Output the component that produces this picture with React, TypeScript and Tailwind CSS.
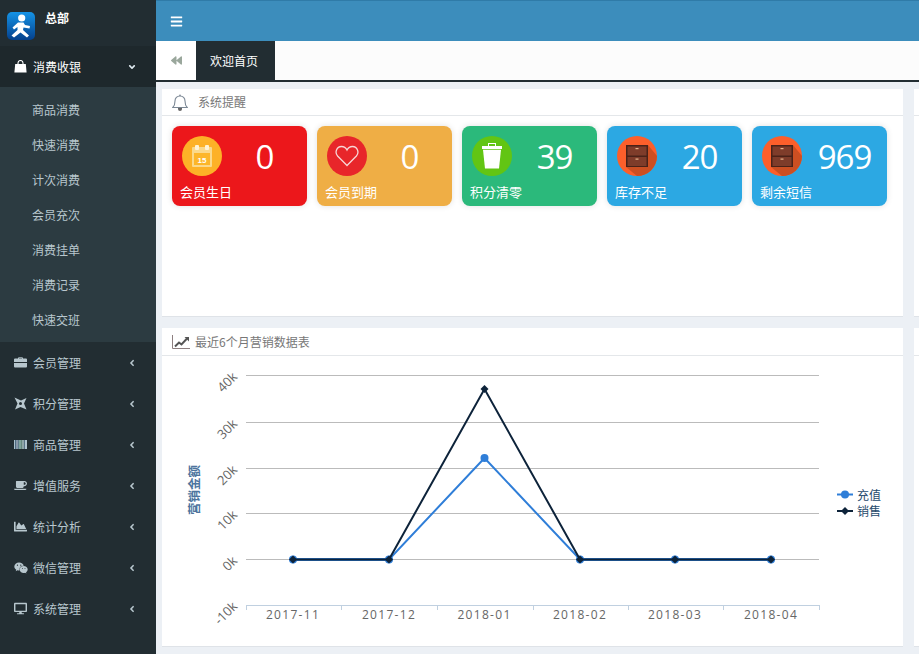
import React from "react";
import {
  FaAngleDown,
  FaAngleLeft,
  FaBackward,
  FaBars,
  FaChartArea,
  FaCoffee,
  FaDesktop,
  FaWeixin,
} from "react-icons/fa";

const subItems = ["商品消费", "快速消费", "计次消费", "会员充次", "消费挂单", "消费记录", "快速交班"];

function BagIcon() {
  return (
    <svg width="13" height="13" viewBox="0 0 13 13" className="mr-[6px] shrink-0">
      <path d="M4 5 V3 A2.5 2.5 0 0 1 9 3 V5" fill="none" stroke="currentColor" strokeWidth="1.1" />
      <path d="M1.2 4 H11.8 L12.6 12.5 H0.4 Z" fill="currentColor" />
    </svg>
  );
}

function CaseIcon() {
  return (
    <svg width="13" height="13" viewBox="0 0 13 13" className="mr-[6px] shrink-0">
      <path d="M4.5 3 V1.8 H8.5 V3" fill="none" stroke="currentColor" strokeWidth="1" />
      <path d="M1 2.5 H12 A1 1 0 0 1 13 3.5 V6 H0 V3.5 A1 1 0 0 1 1 2.5 Z" fill="currentColor" />
      <path d="M0 7 H13 V10.5 A1 1 0 0 1 12 11.5 H1 A1 1 0 0 1 0 10.5 Z" fill="currentColor" />
    </svg>
  );
}

function PinwheelIcon() {
  return (
    <svg width="13" height="13" viewBox="0 0 13 13" className="mr-[6px] shrink-0">
      <path
        fillRule="evenodd"
        d="M0.5 0.5 L7 3.5 L12.5 1 L10 6.5 L12.5 12.5 L6.5 10 L1 12.5 L3.5 6.5 Z M6.5 5 A1.5 1.5 0 1 0 6.5 8 A1.5 1.5 0 1 0 6.5 5 Z"
        fill="currentColor"
      />
    </svg>
  );
}

function BarcodeIcon() {
  return (
    <svg width="13" height="13" viewBox="0 0 13 13" className="mr-[6px] shrink-0">
      <rect x="0" y="2" width="1" height="9" fill="#a9c0cc" />
      <rect x="1" y="2" width="1" height="9" fill="#4d6a80" />
      <rect x="2" y="2" width="2" height="9" fill="#8797a8" />
      <rect x="4" y="2" width="1" height="9" fill="#5f7d8c" />
      <rect x="5" y="2" width="2" height="9" fill="#7fa39c" />
      <rect x="7" y="2" width="1" height="9" fill="#66897f" />
      <rect x="8" y="2" width="2" height="9" fill="#8fa6a8" />
      <rect x="10" y="2" width="1" height="9" fill="#5a7488" />
      <rect x="11" y="2" width="2" height="9" fill="#b0c4cf" />
    </svg>
  );
}

const menuItems: { label: string; icon: React.ReactNode }[] = [
  { label: "会员管理", icon: <CaseIcon /> },
  { label: "积分管理", icon: <PinwheelIcon /> },
  { label: "商品管理", icon: <BarcodeIcon /> },
  { label: "增值服务", icon: <FaCoffee className="text-[13px] w-[13px] mr-[6px]" /> },
  { label: "统计分析", icon: <FaChartArea className="text-[13px] w-[13px] mr-[6px]" /> },
  { label: "微信管理", icon: <FaWeixin className="text-[14px] w-[14px] mr-[5px]" /> },
  { label: "系统管理", icon: <FaDesktop className="text-[13px] w-[13px] mr-[6px]" /> },
];

function Logo() {
  return (
    <svg width="28" height="28" viewBox="0 0 28 28" className="shrink-0">
      <defs>
        <linearGradient id="logoBg" x1="0" y1="0" x2="0" y2="1">
          <stop offset="0" stopColor="#1593e6" />
          <stop offset="1" stopColor="#04408c" />
        </linearGradient>
      </defs>
      <rect width="28" height="28" rx="5" fill="url(#logoBg)" />
      <circle cx="14.7" cy="6" r="3.6" fill="#fff" />
      <path
        d="M11 10.5 L16.5 10.5 L18 13 L23 14 L22.5 16.5 L16.5 15.5 L16 18 L22 23.5 L20 25.5 L13.5 20.5 L7 25.5 L4.5 23.5 L10.5 18 L10.5 15 L7 17.5 L5.5 15.5 Z"
        fill="#fff"
      />
    </svg>
  );
}

function CalendarIcon() {
  return (
    <svg width="22" height="24" viewBox="0 0 22 24">
      <rect x="1" y="3" width="20" height="20" rx="1" fill="#fbd98b" />
      <rect x="3" y="9" width="16" height="12" fill="#fdb62a" />
      <rect x="4" y="1" width="4" height="5" rx="1" fill="#fff3d6" />
      <rect x="14" y="1" width="4" height="5" rx="1" fill="#fff3d6" />
      <text x="11" y="19" textAnchor="middle" fontSize="8" fontWeight="700" fill="#fff" fontFamily="Liberation Sans, sans-serif">
        15
      </text>
    </svg>
  );
}

function HeartIcon() {
  return (
    <svg width="24" height="22" viewBox="0 0 24 22" fill="none">
      <path
        d="M12 20.5 L2.6 11 C-0.5 7.5 1.5 1.5 6.5 1.5 C9 1.5 11 3 12 5 C13 3 15 1.5 17.5 1.5 C22.5 1.5 24.5 7.5 21.4 11 Z"
        stroke="#f8d6d6"
        strokeWidth="1.3"
      />
    </svg>
  );
}

function TrashIcon() {
  return (
    <svg width="20" height="26" viewBox="0 0 20 26">
      <rect x="6.5" y="0.5" width="7" height="3" fill="none" stroke="#fff" strokeWidth="1" />
      <rect x="0" y="3" width="20" height="3" fill="#fff" />
      <path d="M1 6.8 H19 L17 25.5 H3 Z" fill="#fff" />
    </svg>
  );
}

function DrawerIcon() {
  return (
    <svg width="40" height="40" viewBox="0 0 40 40" className="shrink-0">
      <circle cx="20" cy="20" r="20" fill="#fc5f2b" />
      <path d="M9 31 L31 9 L40 20 A20 20 0 0 1 20 40 Z" fill="#cc4f22" />
      <rect x="9" y="9" width="22" height="22" fill="#4a2218" />
      <rect x="10.5" y="10.5" width="19" height="9" fill="#7e3c2a" />
      <rect x="10.5" y="21" width="19" height="9" fill="#7e3c2a" />
      <rect x="18.5" y="12" width="3" height="1.2" fill="#e8b48c" />
      <rect x="18.5" y="22.5" width="3" height="1.2" fill="#e8b48c" />
    </svg>
  );
}

function BellIcon() {
  return (
    <svg width="16" height="17" viewBox="0 0 16 17" fill="none" className="mr-[10px] shrink-0">
      <path
        d="M0.8 13.5 C2.8 11.5 3 9.5 3 7 C3 4 5 2 8 2 C11 2 13 4 13 7 C13 9.5 13.2 11.5 15.2 13.5 Z"
        stroke="#7b8794"
        strokeWidth="1.1"
      />
      <path d="M7 1.8 H9 V0.8 H7 Z" fill="#7b8794" />
      <path d="M6 14 H10 V15 A2 2 0 0 1 6 15 Z" fill="#666666" />
    </svg>
  );
}

function TrendIcon() {
  return (
    <svg width="18" height="14" viewBox="0 0 18 14" fill="none" className="mr-[5px] shrink-0">
      <path d="M0.5 0 V13.5 H18" stroke="#8d7f80" strokeWidth="1" />
      <path d="M3 11.5 L7 7.5 L9.5 9.5 L15 3.5" stroke="#555555" strokeWidth="2" />
      <path d="M12.5 2 H17 V6.5 Z" fill="#555555" />
    </svg>
  );
}

function StatCard({ color, label, value, icon }: { color: string; label: string; value: string; icon: React.ReactNode }) {
  return (
    <div className={`w-[135px] h-[80px] rounded-lg shadow-[0_0_6px_rgba(0,0,0,0.12)] text-white shrink-0 ${color}`}>
      <div className="flex h-[50px] pl-[10px] pt-[10px]">
        {icon}
        <div className="flex-1 text-center text-[33px] tracking-[-1px] leading-[42px] font-['Open_Sans',sans-serif]">{value}</div>
      </div>
      <div className="text-[13px] leading-[18px] pl-2 pt-[7px]">{label}</div>
    </div>
  );
}

function Circle({ color, children }: { color: string; children: React.ReactNode }) {
  return <div className={`w-10 h-10 rounded-full flex items-center justify-center shrink-0 ${color}`}>{children}</div>;
}

function Chart() {
  const xs = [293, 389, 484.5, 580, 675, 771];
  const months = ["2017-11", "2017-12", "2018-01", "2018-02", "2018-03", "2018-04"];
  const grid = [
    { y: 375.5, label: "40k" },
    { y: 422.5, label: "30k" },
    { y: 468.5, label: "20k" },
    { y: 513.5, label: "10k" },
    { y: 559.5, label: "0k" },
  ];
  const blue = [559.5, 559.5, 458, 559.5, 559.5, 559.5];
  const dark = [559.5, 559.5, 389, 559.5, 559.5, 559.5];
  const pts = (ys: number[]) => xs.map((x, i) => `${x},${ys[i]}`).join(" ");
  const ticks = [246, 341, 437, 533, 628, 723, 819];

  return (
    <svg width="741" height="291" viewBox="162 356 741 291" className="block" fontFamily="'Noto Sans CJK SC', sans-serif">
      {grid.map((g) => (
        <line key={g.y} x1="246" x2="819" y1={g.y} y2={g.y} stroke="#bbbbbb" strokeWidth="1" />
      ))}
      <line x1="246" x2="819" y1="605.5" y2="605.5" stroke="#c0d0e0" />
      {ticks.map((x) => (
        <line key={x} x1={x + 0.5} x2={x + 0.5} y1="605" y2="610" stroke="#c0d0e0" />
      ))}
      {[...grid, { y: 605, label: "-10k" }].map((g) => (
        <text
          key={g.label}
          x="236"
          y={g.y + 3}
          textAnchor="end"
          fontSize="13"
          fill="#666666"
          fontFamily="'Open Sans', sans-serif"
          transform={`rotate(-45 236 ${g.y})`}
        >
          {g.label}
        </text>
      ))}
      {months.map((m, i) => (
        <text key={m} x={xs[i]} y="619" textAnchor="middle" fontSize="12" letterSpacing="1.3" fill="#666666" fontFamily="'Open Sans', sans-serif">
          {m}
        </text>
      ))}
      <text x="199" y="490" textAnchor="middle" fontSize="12.5" fontWeight="700" fill="#4d759e" transform="rotate(-90 199 490)">
        营销金额
      </text>
      <polyline points={pts(blue)} fill="none" stroke="#2f7ed8" strokeWidth="2" />
      <line x1="293" x2="389" y1="559.5" y2="559.5" stroke="#2f7ed8" strokeWidth="3" />
      <line x1="580" x2="771" y1="559.5" y2="559.5" stroke="#2f7ed8" strokeWidth="3" />
      {xs.map((x, i) => (
        <circle key={x} cx={x} cy={blue[i]} r="4" fill="#2f7ed8" />
      ))}
      <polyline points={pts(dark)} fill="none" stroke="#0d233a" strokeWidth="2" />
      {xs.map((x, i) => (
        <path key={x} d={`M${x} ${dark[i] - 4} L${x + 4} ${dark[i]} L${x} ${dark[i] + 4} L${x - 4} ${dark[i]} Z`} fill="#0d233a" />
      ))}
      <line x1="837" x2="853" y1="494.5" y2="494.5" stroke="#2f7ed8" strokeWidth="2" />
      <circle cx="845" cy="494.5" r="4" fill="#2f7ed8" />
      <text x="857" y="499.5" fontSize="12" fill="#274b6d">
        充值
      </text>
      <line x1="837" x2="853" y1="511" y2="511" stroke="#0d233a" strokeWidth="2" />
      <path d="M845 507 L849 511 L845 515 L841 511 Z" fill="#0d233a" />
      <text x="857" y="515.5" fontSize="12" fill="#274b6d">
        销售
      </text>
    </svg>
  );
}

export default function App() {
  return (
    <div className="flex h-[654px] w-[919px] overflow-hidden bg-[#ecf0f5] font-['Noto_Sans_CJK_SC',sans-serif]">
      <aside className="w-[156px] shrink-0 bg-[#222d32] text-[12px] text-[#b8c7ce]">
        <div className="flex h-[46px] pl-[7px] pt-3 gap-[10px]">
          <Logo />
          <span className="text-[12px] font-bold text-white leading-[12px]">总部</span>
        </div>
        <div className="flex h-[41px] items-center bg-[#1e282c] pl-[14px] pr-[19px] text-white">
          <BagIcon />
          <span className="flex-1">消费收银</span>
          <FaAngleDown className="text-[10px] text-[#dfeaf0]" />
        </div>
        <ul className="bg-[#2c3b41] py-[5px] h-[255px]">
          {subItems.map((item) => (
            <li key={item} className="flex h-[35px] items-center pl-8">
              {item}
            </li>
          ))}
        </ul>
        {menuItems.map(({ label, icon }) => (
          <div key={label} className="flex h-[41px] items-center pl-[14px] pr-[19px]">
            {icon}
            <span className="flex-1">{label}</span>
            <FaAngleLeft className="text-[10px]" />
          </div>
        ))}
      </aside>

      <main className="flex-1 min-w-0">
        <header className="h-[41px] bg-[#3c8dbc] border-t border-[#2f7ba8] flex items-center pl-[14px] text-white">
          <FaBars className="text-[13px]" />
        </header>
        <nav className="flex h-[41px] bg-[#fcfcfc] border-b-2 border-[#222d32]">
          <div className="flex w-10 items-center justify-center bg-white text-[#9aa79c]">
            <FaBackward className="text-[11px]" />
          </div>
          <div className="flex w-[79px] items-center pl-[14px] bg-[#222d32] text-[12px] text-white">欢迎首页</div>
        </nav>

        <div className="flex gap-[11px] pl-[6px] pt-[7px]">
          <div className="flex w-[741px] shrink-0 flex-col gap-[11px]">
            <section className="h-[228px] bg-white border-b border-[#dfe3e8]">
              <div className="flex h-[27px] items-center border-b border-[#e4e7ea] pl-[10px] text-[12px] text-[#777777]">
                <BellIcon />
                系统提醒
              </div>
              <div className="flex gap-[10px] pl-[10px] pt-[10px]">
                <StatCard color="bg-[#ec171b]" label="会员生日" value="0" icon={<Circle color="bg-[#fdb127]"><CalendarIcon /></Circle>} />
                <StatCard color="bg-[#efae45]" label="会员到期" value="0" icon={<Circle color="bg-[#e8262a]"><HeartIcon /></Circle>} />
                <StatCard color="bg-[#2bb97b]" label="积分清零" value="39" icon={<Circle color="bg-[#62c513]"><TrashIcon /></Circle>} />
                <StatCard color="bg-[#2ca8e3]" label="库存不足" value="20" icon={<DrawerIcon />} />
                <StatCard color="bg-[#2ca8e3]" label="剩余短信" value="969" icon={<DrawerIcon />} />
              </div>
            </section>
            <section className="h-[319px] bg-white border-b border-[#dfe3e8]">
              <div className="flex h-[28px] items-center border-b border-[#e4e7ea] pl-[10px] text-[12px] text-[#777777]">
                <TrendIcon />
                最近6个月营销数据表
              </div>
              <Chart />
            </section>
          </div>
          <div className="flex flex-1 flex-col gap-[11px]">
            <section className="h-[228px] bg-white border-b border-[#dfe3e8]">
              <div className="h-[27px] border-b border-[#e4e7ea]" />
            </section>
            <section className="h-[319px] bg-white border-b border-[#dfe3e8]">
              <div className="h-[28px] border-b border-[#e4e7ea]" />
            </section>
          </div>
        </div>
      </main>
    </div>
  );
}
